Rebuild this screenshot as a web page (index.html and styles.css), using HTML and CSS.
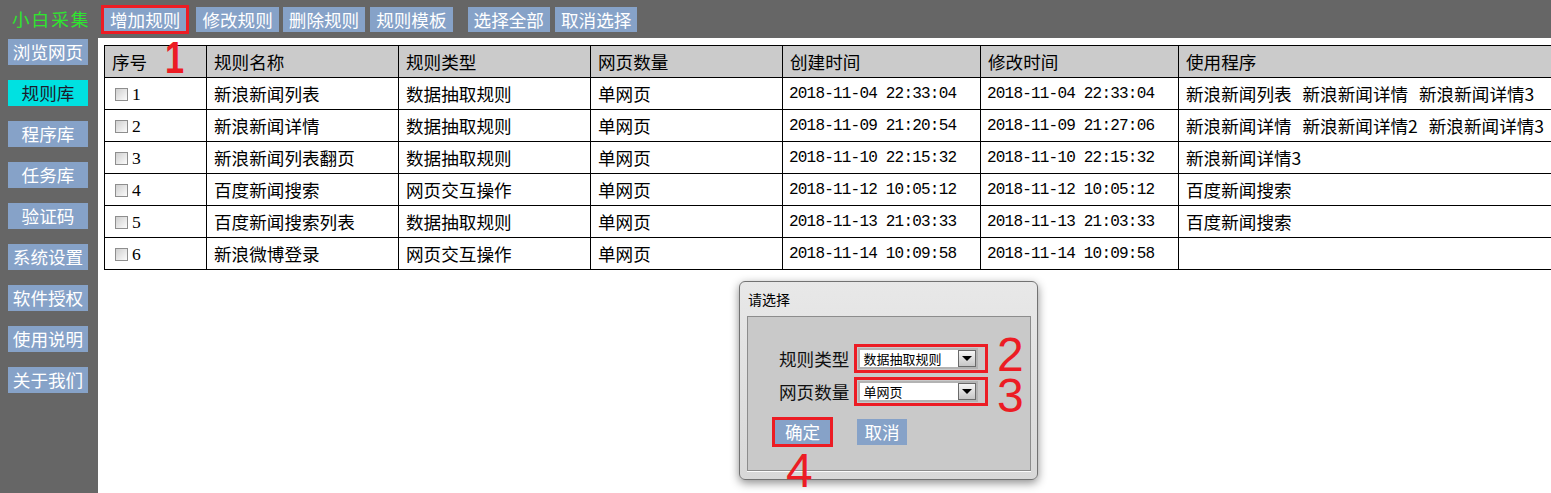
FILE: index.html
```html
<!DOCTYPE html>
<html lang="zh-CN">
<head>
<meta charset="utf-8">
<title>小白采集 - 规则库</title>
<link rel="stylesheet" href="styles.css">
</head>
<body>
<div class="app">
  <header class="topbar">
    <div class="logo">小白采集</div>
    <nav class="toolbar">
      <span class="tbtn tbtn-marked">增加规则</span>
      <span class="tbtn gap-a">修改规则</span>
      <span class="tbtn gap-b">删除规则</span>
      <span class="tbtn gap-c">规则模板</span>
      <span class="tbtn gap-d">选择全部</span>
      <span class="tbtn gap-c">取消选择</span>
    </nav>
  </header>
  <aside class="sidebar">
    <span class="sbtn">浏览网页</span>
    <span class="sbtn sbtn-current">规则库</span>
    <span class="sbtn">程序库</span>
    <span class="sbtn">任务库</span>
    <span class="sbtn">验证码</span>
    <span class="sbtn">系统设置</span>
    <span class="sbtn">软件授权</span>
    <span class="sbtn">使用说明</span>
    <span class="sbtn">关于我们</span>
  </aside>
  <main class="content">
    <table class="grid">
      <colgroup>
        <col class="c-no"><col class="c-name"><col class="c-type"><col class="c-pages"><col class="c-time"><col class="c-time"><col class="c-prog">
      </colgroup>
      <thead>
        <tr><th>序号</th><th>规则名称</th><th>规则类型</th><th>网页数量</th><th>创建时间</th><th>修改时间</th><th>使用程序</th></tr>
      </thead>
      <tbody>
        <tr><td><span class="cb"></span><span class="num">1</span></td><td>新浪新闻列表</td><td>数据抽取规则</td><td>单网页</td><td class="time">2018-11-04 22:33:04</td><td class="time">2018-11-04 22:33:04</td><td class="progs">新浪新闻列表 新浪新闻详情 新浪新闻详情3</td></tr>
        <tr><td><span class="cb"></span><span class="num">2</span></td><td>新浪新闻详情</td><td>数据抽取规则</td><td>单网页</td><td class="time">2018-11-09 21:20:54</td><td class="time">2018-11-09 21:27:06</td><td class="progs">新浪新闻详情 新浪新闻详情2 新浪新闻详情3</td></tr>
        <tr><td><span class="cb"></span><span class="num">3</span></td><td>新浪新闻列表翻页</td><td>数据抽取规则</td><td>单网页</td><td class="time">2018-11-10 22:15:32</td><td class="time">2018-11-10 22:15:32</td><td class="progs">新浪新闻详情3</td></tr>
        <tr><td><span class="cb"></span><span class="num">4</span></td><td>百度新闻搜索</td><td>网页交互操作</td><td>单网页</td><td class="time">2018-11-12 10:05:12</td><td class="time">2018-11-12 10:05:12</td><td class="progs">百度新闻搜索</td></tr>
        <tr><td><span class="cb"></span><span class="num">5</span></td><td>百度新闻搜索列表</td><td>数据抽取规则</td><td>单网页</td><td class="time">2018-11-13 21:03:33</td><td class="time">2018-11-13 21:03:33</td><td class="progs">百度新闻搜索</td></tr>
        <tr><td><span class="cb"></span><span class="num">6</span></td><td>新浪微博登录</td><td>网页交互操作</td><td>单网页</td><td class="time">2018-11-14 10:09:58</td><td class="time">2018-11-14 10:09:58</td><td class="progs"></td></tr>
      </tbody>
    </table>
  </main>

  <div class="dialog">
    <div class="dlg-title">请选择</div>
    <div class="dlg-panel">
      <div class="field">
        <span class="field-label">规则类型</span>
        <span class="pick">
          <span class="select"><span class="select-val">数据抽取规则</span><span class="select-arrow"><i class="tri"></i></span></span>
        </span>
      </div>
      <div class="field field-second">
        <span class="field-label">网页数量</span>
        <span class="pick">
          <span class="select"><span class="select-val">单网页</span><span class="select-arrow"><i class="tri"></i></span></span>
        </span>
      </div>
      <div class="actions">
        <span class="pick-btn"><span class="dbtn">确定</span></span>
        <span class="dbtn dbtn-cancel">取消</span>
      </div>
    </div>
  </div>

  <span class="mark mark-1">1</span>
  <span class="mark mark-2">2</span>
  <span class="mark mark-3">3</span>
  <span class="mark mark-4">4</span>
</div>
</body>
</html>
```
FILE: styles.css
```css
html, body {
  margin: 0;
  height: 100%;
  overflow: hidden;
}
body {
  font-family: "Noto Sans CJK SC", "Liberation Sans", sans-serif;
  color: #000;
}
.app {
  position: relative;
  display: grid;
  grid-template-columns: 98px 1fr;
  grid-template-rows: 38px 1fr;
  height: 493px;
  background: #666666;
  overflow: hidden;
}

/* top bar */
.topbar {
  grid-column: 1 / -1;
  display: flex;
  align-items: center;
}
.logo {
  width: 98px;
  box-sizing: border-box;
  padding-left: 12px;
  color: #2ee62e;
  font-size: 17.6px;
  letter-spacing: 2px;
  line-height: 38px;
  white-space: nowrap;
}
.toolbar {
  display: flex;
  align-items: center;
  padding-left: 5px;
}
.tbtn {
  display: block;
  height: 25px;
  line-height: 25px;
  padding: 0 6px;
  background: #86a2c8;
  color: #fff;
  font-size: 17.6px;
  white-space: nowrap;
}
.tbtn-marked {
  padding: 0 7px;
  outline: 3px solid #ec1c24;
  outline-offset: -1px;
}
.gap-a { margin-left: 9px; }
.gap-b { margin-left: 4px; }
.gap-c { margin-left: 5px; }
.gap-d { margin-left: 15px; }

/* sidebar */
.sidebar {
  display: flex;
  flex-direction: column;
  align-items: flex-start;
  gap: 15px;
  padding: 1px 0 0 8px;
}
.sbtn {
  display: block;
  width: 80px;
  height: 26px;
  line-height: 26px;
  text-align: center;
  background: #86a2c8;
  color: #fff;
  font-size: 17.6px;
  white-space: nowrap;
}
.sbtn-current {
  background: #00e1e1;
  color: #1c1c2c;
}

/* content */
.content {
  background: #fff;
  padding: 7px 0 0 6px;
  overflow: hidden;
}
.grid {
  border-collapse: collapse;
  table-layout: fixed;
  width: 1480px;
  font-size: 17.6px;
}
.c-no { width: 102px; }
.c-name { width: 192px; }
.c-type { width: 192px; }
.c-pages { width: 192px; }
.c-time { width: 198px; }
.c-prog { width: 406px; }
.grid th,
.grid td {
  border: 1px solid #000;
  height: 31px;
  padding: 0 0 0 7px;
  text-align: left;
  font-weight: normal;
  white-space: nowrap;
  overflow: hidden;
  line-height: 30px;
}
.grid th {
  background: #cbcbcb;
}
.grid td.time {
  font-family: "Liberation Mono", monospace;
  font-size: 16px;
  letter-spacing: -0.8px;
  padding-left: 6px;
}
.grid td.progs {
  word-spacing: 7px;
}
.cb {
  display: inline-block;
  width: 11px;
  height: 11px;
  border: 1px solid #8e8e8e;
  background: linear-gradient(135deg, #cfcfcf, #fbfbfb);
  vertical-align: -1px;
  margin: 0 4px 0 3px;
}
.num {
  font-family: "Liberation Serif", serif;
  font-size: 17.6px;
}

/* dialog */
.dialog {
  position: absolute;
  left: 739px;
  top: 281px;
  width: 299px;
  height: 199px;
  box-sizing: border-box;
  border: 1px solid #727272;
  border-radius: 6px;
  background: linear-gradient(#e8e8e8, #d8d8d8);
  box-shadow: 0 3px 10px rgba(0, 0, 0, 0.45);
  padding: 0 6px 8px 7px;
  display: flex;
  flex-direction: column;
}
.dlg-title {
  height: 34px;
  line-height: 34px;
  font-size: 14px;
  padding-left: 1px;
}
.dlg-panel {
  flex: 1;
  background: #c9c9c9;
  border: 1px solid #8c8c8c;
  box-shadow: 0 1px 0 #fbfbfb;
  padding-top: 27px;
}
.field {
  display: flex;
  align-items: center;
  gap: 5px;
  padding-left: 31px;
}
.field-second {
  margin-top: 4px;
}
.field-label {
  font-size: 17.6px;
  line-height: 29px;
  color: #111;
}
.pick {
  display: block;
  border: 3px solid #ec1c24;
  padding: 1px 7px 1px 1px;
}
.select {
  display: flex;
  width: 120px;
  height: 21px;
  box-sizing: border-box;
  border: 2px solid #b3b3b3;
  background: #fff;
}
.select-val {
  flex: 1;
  font-size: 13px;
  line-height: 17px;
  padding-left: 3px;
  white-space: nowrap;
}
.select-arrow {
  width: 18px;
  box-sizing: border-box;
  border: 1px solid #6a6a6a;
  background: linear-gradient(#f6f6f6, #c6c6c6);
  display: flex;
  align-items: center;
  justify-content: center;
}
.tri {
  display: block;
  width: 0;
  height: 0;
  border-left: 5px solid transparent;
  border-right: 5px solid transparent;
  border-top: 5px solid #000;
}
.actions {
  display: flex;
  align-items: flex-start;
  gap: 24px;
  padding-left: 24px;
  margin-top: 11px;
}
.pick-btn {
  display: block;
  border: 3px solid #ec1c24;
}
.dbtn {
  display: block;
  width: 55px;
  height: 24px;
  line-height: 24px;
  text-align: center;
  background: #86a2c8;
  color: #fff;
  font-size: 17.6px;
}
.dbtn-cancel {
  width: 50px;
  height: 26px;
  line-height: 26px;
  margin-top: 2px;
}

/* red annotation numerals */
.mark {
  position: absolute;
  color: #ec1c24;
  font-family: "Liberation Sans", sans-serif;
  font-size: 48px;
  line-height: 1;
}
.mark-1 {
  left: 165px;
  top: 36px;
  font-size: 44px;
  font-weight: bold;
  transform: scaleX(0.78);
  transform-origin: left top;
}
.mark-2 { left: 997px; top: 331px; }
.mark-3 { left: 997px; top: 372px; }
.mark-4 { left: 786px; top: 447px; }
```
